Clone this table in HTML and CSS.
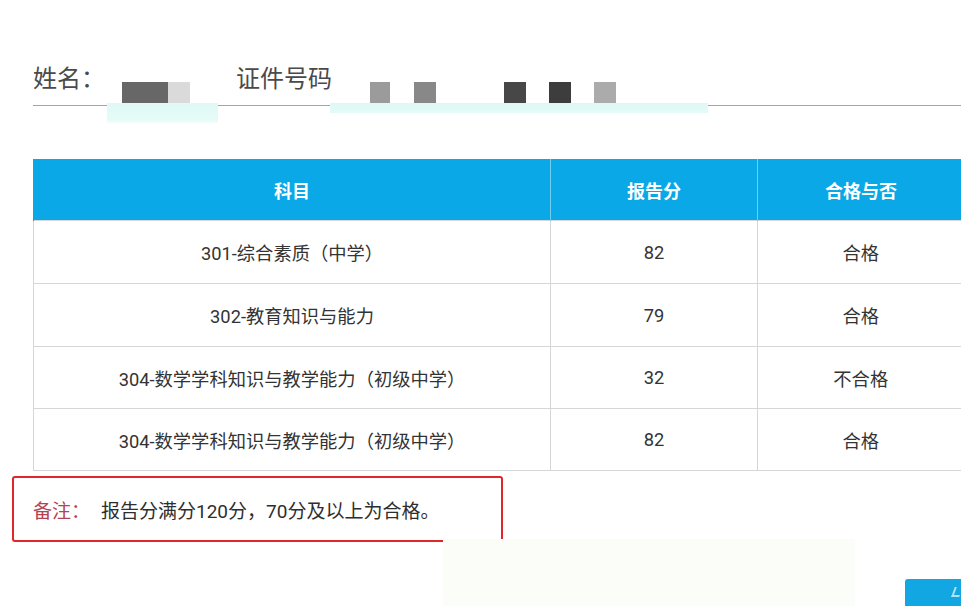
FILE: index.html
```html
<!DOCTYPE html>
<html lang="zh">
<head>
<meta charset="utf-8">
<title>成绩查询</title>
<link rel="stylesheet" href="styles.css">
</head>
<body>
<div class="page">
  <div class="info">
    <span class="label">姓名：</span>
    <span class="field field-name">
      <i class="sq sq-dark w46"></i><i class="sq sq-light w22"></i>
    </span>
    <span class="label label-id">证件号码</span>
    <span class="field field-id">
      <i class="sq c1 w20 m40"></i><i class="sq c2 w22 m24"></i><i class="sq c3 w22 m68"></i><i class="sq c4 w22 m23"></i><i class="sq c5 w22 m23"></i>
    </span>
  </div>

  <table class="scores">
    <thead>
      <tr><th class="col1">科目</th><th class="col2">报告分</th><th class="col3">合格与否</th></tr>
    </thead>
    <tbody>
      <tr class="tall"><td>301-综合素质（中学）</td><td>82</td><td>合格</td></tr>
      <tr class="tall"><td>302-教育知识与能力</td><td>79</td><td>合格</td></tr>
      <tr><td>304-数学学科知识与教学能力（初级中学）</td><td>32</td><td>不合格</td></tr>
      <tr><td>304-数学学科知识与教学能力（初级中学）</td><td>82</td><td>合格</td></tr>
    </tbody>
  </table>

  <div class="note"><span class="note-key">备注：</span><span class="note-text">报告分满分120分，70分及以上为合格。</span></div>

  <div class="footer">
    <div class="faint"></div>
    <div class="btn"></div>
  </div>
</div>
</body>
</html>
```
FILE: styles.css
```css
html, body {
  margin: 0;
  padding: 0;
  width: 961px;
  height: 606px;
  overflow: hidden;
  background: #ffffff;
}
.page {
  font-family: "Roboto", "Noto Sans CJK SC", sans-serif;
  color: #333;
}
.info {
  display: flex;
  align-items: flex-start;
  height: 45px;
  padding-top: 60px;
  margin-left: 33px;
  border-bottom: 1.5px solid #8fabb3;
}
.label {
  font-size: 24px;
  line-height: 32px;
  margin-top: 3px;
  color: #4a4a4a;
  white-space: nowrap;
}
.label-id {
  margin-left: 18px;
}
.field {
  display: flex;
  align-items: flex-start;
  margin-top: 22px;
  flex-shrink: 0;
}
.field-name {
  margin-left: 2px;
  width: 96px;
  height: 41px;
  padding-left: 15px;
  background: linear-gradient(to bottom, rgba(255,255,255,0) 21px, #dff9f6 21px, #e6fbf8 38px, rgba(230,251,248,0.4) 41px);
}
.field-id {
  margin-left: -2px;
  width: 378px;
  height: 31px;
  background: linear-gradient(to bottom, rgba(255,255,255,0) 21px, #dcf8f5 21px, #e6fbf8 31px);
}
.sq {
  display: block;
  height: 21px;
}
.sq-dark { background: #676767; }
.sq-light { background: #dadada; }
.c1 { background: #9b9b9b; }
.c2 { background: #888888; }
.c3 { background: #474747; }
.c4 { background: #3d3d3d; }
.c5 { background: #ababab; }
.w46 { width: 46px; }
.w22 { width: 22px; }
.w20 { width: 20px; }
.m40 { margin-left: 40px; }
.m24 { margin-left: 24px; }
.m68 { margin-left: 68px; }
.m23 { margin-left: 23px; }

.scores {
  margin: 53px 0 0 33px;
  width: 928px;
  border-collapse: collapse;
  table-layout: fixed;
}
.scores th {
  height: 61px;
  padding: 0;
  background: #0aa8e6;
  color: #ffffff;
  font-size: 18px;
  font-weight: bold;
  border-left: 1px solid #6fcdf0;
}
.scores th:first-child { border-left: 1px solid #0aa8e6; }
.col1 { width: 516px; }
.col2 { width: 206px; }
.col3 { width: 206px; }
.scores td {
  height: 61px;
  padding: 0;
  text-align: center;
  font-size: 18.3px;
  color: #333;
  border: 1px solid #d6d6d6;
}
.scores .tall td {
  height: 62px;
}

.note {
  display: flex;
  align-items: center;
  margin: 5px 0 0 12px;
  width: 468px;
  height: 62px;
  padding-left: 19px;
  border: 2px solid #e1262a;
  border-radius: 3px;
  font-size: 19px;
}
.note-key {
  color: #b5434f;
  width: 68px;
}
.note-text {
  color: #2e2e2e;
}

.footer {
  display: flex;
  align-items: flex-start;
  margin-top: -3px;
}
.faint {
  flex-shrink: 0;
  margin-left: 443px;
  width: 412px;
  height: 70px;
  background: #fbfdf9;
}
.btn {
  flex-shrink: 0;
  position: relative;
  margin: 40px 0 0 50px;
  width: 70px;
  height: 40px;
  background: #12a7e3;
  border-radius: 3px 0 0 0;
}
.btn::after {
  content: "";
  position: absolute;
  left: 48px;
  top: 8px;
  width: 6px;
  height: 8px;
  border-left: 2px solid #d9f1fb;
  border-bottom: 2px solid #d9f1fb;
  transform: skewX(-20deg);
  opacity: 0.8;
}
```
